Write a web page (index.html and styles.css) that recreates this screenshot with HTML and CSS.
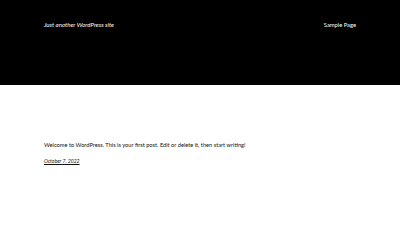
FILE: index.html
```
<!DOCTYPE html>
<html>
<head>
<meta charset="utf-8">
<link rel="stylesheet" href="styles.css">
</head>
<body>
<header class="site-header">
  <p class="tagline">Just another WordPress site</p>
  <nav class="nav"><a href="#" class="nav-link">Sample Page</a></nav>
</header>
<main class="content">
  <p class="post-text">Welcome to WordPress. This is your first post. Edit or delete it, then start writing!</p>
  <p class="post-date"><a href="#">October 7, 2022</a></p>
</main>
</body>
</html>
```
FILE: styles.css
```
html, body {
  margin: 0;
  padding: 0;
  background: #ffffff;
  font-family: Lato, "Open Sans", sans-serif;
  font-size: 5.7px;
  color: #111;
}
.site-header {
  background: #000;
  color: #fff;
  height: 85px;
  box-sizing: border-box;
  padding: 20px 44px 0 44px;
  display: flex;
  justify-content: space-between;
  align-items: flex-start;
}
.tagline {
  margin: 0;
  font-size: 6.1px;
  font-style: italic;
  line-height: 10px;
}
.nav-link {
  color: #fff;
  font-size: 5.8px;
  text-decoration: none;
  line-height: 10px;
}
.content {
  padding: 55px 44px 0 44px;
}
.post-text {
  margin: 0;
  line-height: 10px;
}
.post-date {
  margin: 6px 0 0 0;
  font-size: 5.1px;
  font-style: italic;
  line-height: 10px;
}
.post-date a {
  color: #111;
}
```
